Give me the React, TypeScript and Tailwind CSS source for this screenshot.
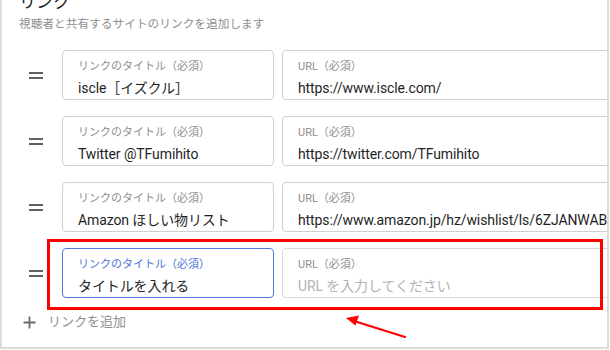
import React from "react";

type LinkRow = {
  title: string;
  url: string;
};

const rows: LinkRow[] = [
  { title: "iscle［イズクル］", url: "https://www.iscle.com/" },
  { title: "Twitter @TFumihito", url: "https://twitter.com/TFumihito" },
  {
    title: "Amazon ほしい物リスト",
    url: "https://www.amazon.jp/hz/wishlist/ls/6ZJANWAB5XKQ",
  },
];

function Handle() {
  return (
    <div className="ml-[27px] mr-[19px] flex w-[14px] shrink-0 flex-col gap-[3px]">
      <span className="block h-[2px] w-full bg-[#606060]" />
      <span className="block h-[2px] w-full bg-[#606060]" />
    </div>
  );
}

function Field({
  label,
  value,
  placeholder,
  focused,
  wide,
}: {
  label: string;
  value?: string;
  placeholder?: string;
  focused?: boolean;
  wide?: boolean;
}) {
  return (
    <div
      className={`flex h-[50px] shrink-0 flex-col rounded-[4px] border px-[15px] pt-[9px] ${
        wide ? "w-[400px]" : "w-[212px]"
      } ${focused ? "border-[#5177db]" : placeholder ? "border-[#dadada]" : "border-[#cfcfcf]"}`}
    >
      <div
        className={`h-[14px] whitespace-nowrap text-[11px] leading-[14px] ${
          focused ? "text-[#4e73d8]" : "text-[#8e8e8e]"
        }`}
      >
        {label}
      </div>
      <div
        className={`mt-[5px] h-[18px] whitespace-nowrap text-[14px] leading-[18px] tracking-[-0.1px] ${
          value ? "text-[#1f1f1f]" : "text-[#b3b3b3]"
        }`}
      >
        {value ?? placeholder}
      </div>
    </div>
  );
}

export default function App() {
  return (
    <div
      className="h-[350px] w-[610px] bg-white"
      style={{ fontFamily: "Roboto, 'Noto Sans CJK JP', sans-serif" }}
    >
      <div className="relative h-[349px] w-[609px] overflow-hidden border-b-2 border-l-2 border-r-2 border-[#dcdcdc]">
        <div className="pl-[17px]">
          <div className="-mt-[8px] h-[20px] text-[17px] leading-[20px] text-[#1a1a1a]">
            リンク
          </div>
          <div className="mt-[4px] h-[16px] text-[11.7px] leading-[16px] text-[#8e8e8e]">
            視聴者と共有するサイトのリンクを追加します
          </div>
        </div>

        <div className="mt-[18px] flex flex-col gap-[16px]">
          {rows.map((r) => (
            <div key={r.title} className="flex items-center">
              <Handle />
              <div className="flex gap-[8px]">
                <Field label="リンクのタイトル（必須）" value={r.title} />
                <Field label="URL（必須）" value={r.url} wide />
              </div>
            </div>
          ))}
          <div className="flex items-center">
            <Handle />
            <div className="flex gap-[8px]">
              <Field label="リンクのタイトル（必須）" value="タイトルを入れる" focused />
              <Field label="URL（必須）" placeholder="URL を入力してください" wide />
            </div>
          </div>
        </div>

        <div className="mt-[16px] flex items-center pl-[21px]">
          <svg width="13" height="13" viewBox="0 0 13 13" className="shrink-0">
            <path d="M6.5 0.5v12M0.5 6.5h12" stroke="#6b6b6b" strokeWidth="1.8" />
          </svg>
          <span className="ml-[12px] text-[13px] leading-[16px] text-[#8e8e8e]">
            リンクを追加
          </span>
        </div>

        {/* annotation */}
        <div className="absolute left-[45px] top-[239px] h-[71px] w-[556px] border-[3px] border-[#ff0000]" />
        <svg
          className="absolute left-[336px] top-[310px]"
          width="76"
          height="34"
          viewBox="0 0 76 34"
        >
          <path d="M67 27 L16 11" stroke="#ff0000" strokeWidth="2.2" strokeLinecap="round" />
          <path d="M8 8 L21 5.5 L17.5 15.5 Z" fill="#ff0000" />
        </svg>
      </div>
    </div>
  );
}
